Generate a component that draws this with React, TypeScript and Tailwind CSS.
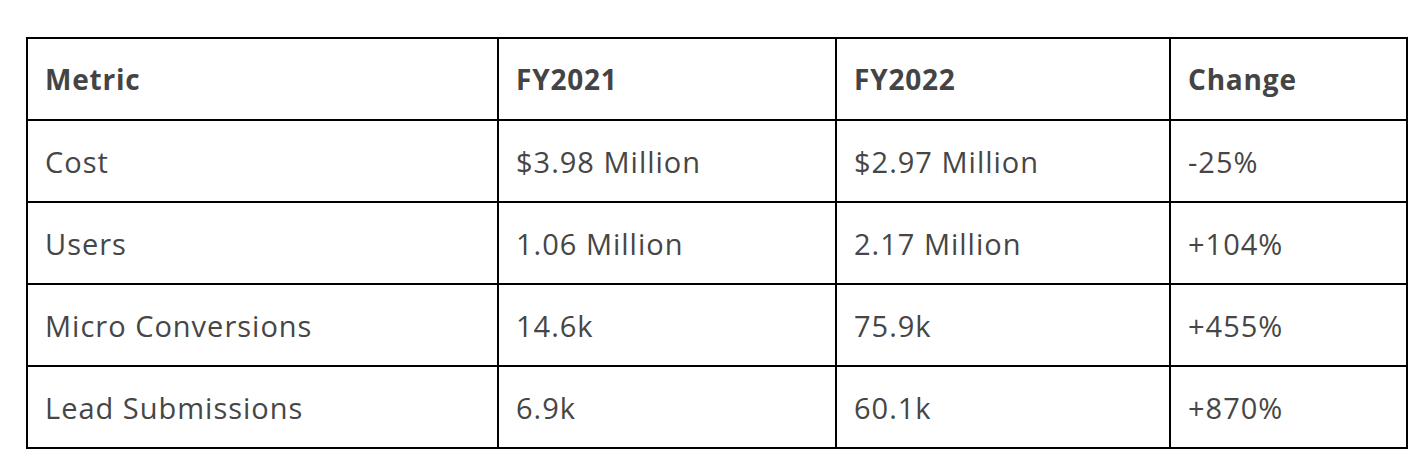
const rows = [
  ["Cost", "$3.98 Million", "$2.97 Million", "-25%"],
  ["Users", "1.06 Million", "2.17 Million", "+104%"],
  ["Micro Conversions", "14.6k", "75.9k", "+455%"],
  ["Lead Submissions", "6.9k", "60.1k", "+870%"],
]

export default function App() {
  return (
    <div className="w-[1426px] h-[470px] bg-white pt-[37px] pl-[26px] font-['Open_Sans',sans-serif] text-[#464646]">
      <table className="table-fixed border-collapse w-[1380px] border-2 border-black">
        <colgroup>
          <col className="w-[471px]" />
          <col className="w-[338px]" />
          <col className="w-[334px]" />
          <col className="w-[237px]" />
        </colgroup>
        <thead>
          <tr className="h-[82px]">
            {["Metric", "FY2021", "FY2022", "Change"].map((h) => (
              <th
                key={h}
                className="border-2 border-black text-left align-middle pl-[17px] text-[28px] tracking-[0.8px] font-bold text-[#444]"
              >
                {h}
              </th>
            ))}
          </tr>
        </thead>
        <tbody>
          {rows.map((r) => (
            <tr key={r[0]} className="h-[82px]">
              {r.map((c, i) => (
                <td
                  key={i}
                  className="border-2 border-black align-middle pl-[17px] text-[29px] tracking-[1px] pt-[2px]"
                >
                  {c}
                </td>
              ))}
            </tr>
          ))}
        </tbody>
      </table>
    </div>
  )
}
